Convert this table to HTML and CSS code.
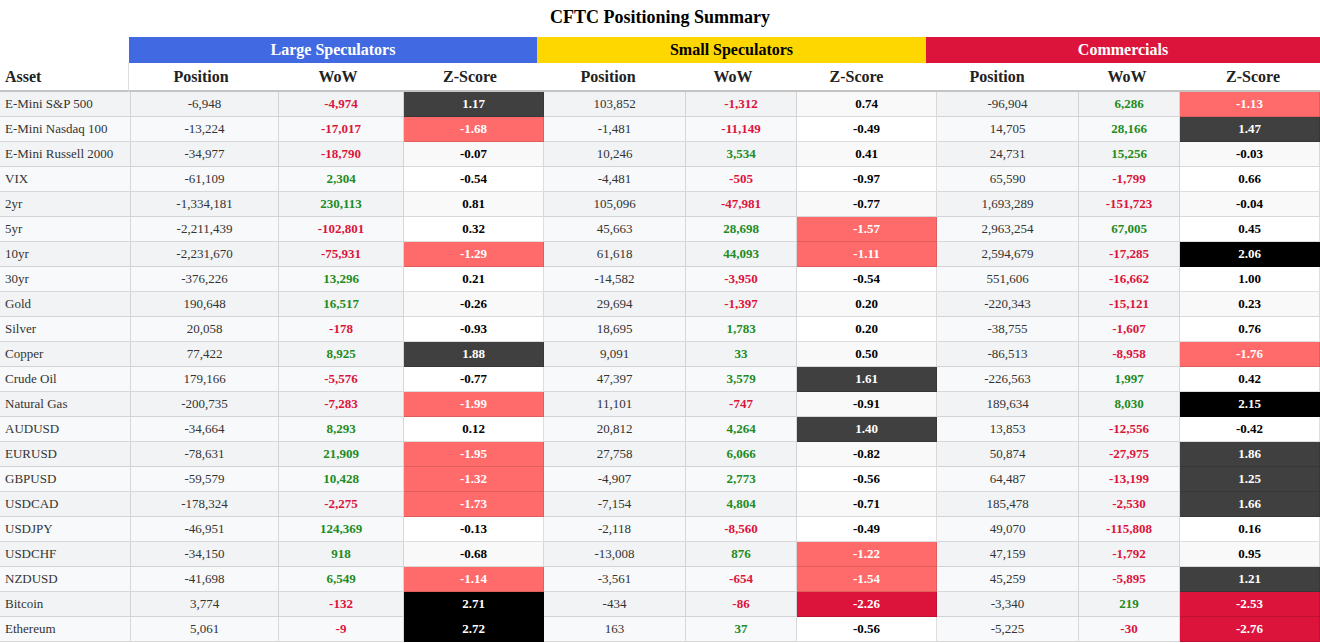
FILE: index.html
```html
<!DOCTYPE html>
<html lang="en">
<head>
<meta charset="utf-8">
<title>CFTC Positioning Summary</title>
<link rel="stylesheet" href="styles.css">
</head>
<body>
<div class="title">CFTC Positioning Summary</div>
<table class="head">
  <colgroup>
    <col class="h-asset">
    <col class="h1"><col class="h2"><col class="h3">
    <col class="h4"><col class="h5"><col class="h6">
    <col class="h7"><col class="h8"><col class="h9">
  </colgroup>
  <tr class="groups">
    <th class="blank"></th>
    <th colspan="3" class="g-large">Large Speculators</th>
    <th colspan="3" class="g-small">Small Speculators</th>
    <th colspan="3" class="g-comm">Commercials</th>
  </tr>
  <tr class="cols">
    <th class="asset-h">Asset</th>
    <th>Position</th><th>WoW</th><th>Z-Score</th>
    <th>Position</th><th>WoW</th><th>Z-Score</th>
    <th>Position</th><th>WoW</th><th>Z-Score</th>
  </tr>
</table>
<table class="body">
  <colgroup>
    <col class="c-asset">
    <col class="c1"><col class="c2"><col class="c3">
    <col class="c4"><col class="c5"><col class="c6">
    <col class="c7"><col class="c8"><col class="c9">
  </colgroup>
  <tbody>
    <tr><td class="asset">E-Mini S&amp;P 500</td><td>-6,948</td><td class="neg">-4,974</td><td class="z zd">1.17</td><td>103,852</td><td class="neg">-1,312</td><td class="z">0.74</td><td>-96,904</td><td class="pos">6,286</td><td class="z zs">-1.13</td></tr>
    <tr><td class="asset">E-Mini Nasdaq 100</td><td>-13,224</td><td class="neg">-17,017</td><td class="z zs">-1.68</td><td>-1,481</td><td class="neg">-11,149</td><td class="z">-0.49</td><td>14,705</td><td class="pos">28,166</td><td class="z zd">1.47</td></tr>
    <tr><td class="asset">E-Mini Russell 2000</td><td>-34,977</td><td class="neg">-18,790</td><td class="z">-0.07</td><td>10,246</td><td class="pos">3,534</td><td class="z">0.41</td><td>24,731</td><td class="pos">15,256</td><td class="z">-0.03</td></tr>
    <tr><td class="asset">VIX</td><td>-61,109</td><td class="pos">2,304</td><td class="z">-0.54</td><td>-4,481</td><td class="neg">-505</td><td class="z">-0.97</td><td>65,590</td><td class="neg">-1,799</td><td class="z">0.66</td></tr>
    <tr><td class="asset">2yr</td><td>-1,334,181</td><td class="pos">230,113</td><td class="z">0.81</td><td>105,096</td><td class="neg">-47,981</td><td class="z">-0.77</td><td>1,693,289</td><td class="neg">-151,723</td><td class="z">-0.04</td></tr>
    <tr><td class="asset">5yr</td><td>-2,211,439</td><td class="neg">-102,801</td><td class="z">0.32</td><td>45,663</td><td class="pos">28,698</td><td class="z zs">-1.57</td><td>2,963,254</td><td class="pos">67,005</td><td class="z">0.45</td></tr>
    <tr><td class="asset">10yr</td><td>-2,231,670</td><td class="neg">-75,931</td><td class="z zs">-1.29</td><td>61,618</td><td class="pos">44,093</td><td class="z zs">-1.11</td><td>2,594,679</td><td class="neg">-17,285</td><td class="z zb">2.06</td></tr>
    <tr><td class="asset">30yr</td><td>-376,226</td><td class="pos">13,296</td><td class="z">0.21</td><td>-14,582</td><td class="neg">-3,950</td><td class="z">-0.54</td><td>551,606</td><td class="neg">-16,662</td><td class="z">1.00</td></tr>
    <tr><td class="asset">Gold</td><td>190,648</td><td class="pos">16,517</td><td class="z">-0.26</td><td>29,694</td><td class="neg">-1,397</td><td class="z">0.20</td><td>-220,343</td><td class="neg">-15,121</td><td class="z">0.23</td></tr>
    <tr><td class="asset">Silver</td><td>20,058</td><td class="neg">-178</td><td class="z">-0.93</td><td>18,695</td><td class="pos">1,783</td><td class="z">0.20</td><td>-38,755</td><td class="neg">-1,607</td><td class="z">0.76</td></tr>
    <tr><td class="asset">Copper</td><td>77,422</td><td class="pos">8,925</td><td class="z zd">1.88</td><td>9,091</td><td class="pos">33</td><td class="z">0.50</td><td>-86,513</td><td class="neg">-8,958</td><td class="z zs">-1.76</td></tr>
    <tr><td class="asset">Crude Oil</td><td>179,166</td><td class="neg">-5,576</td><td class="z">-0.77</td><td>47,397</td><td class="pos">3,579</td><td class="z zd">1.61</td><td>-226,563</td><td class="pos">1,997</td><td class="z">0.42</td></tr>
    <tr><td class="asset">Natural Gas</td><td>-200,735</td><td class="neg">-7,283</td><td class="z zs">-1.99</td><td>11,101</td><td class="neg">-747</td><td class="z">-0.91</td><td>189,634</td><td class="pos">8,030</td><td class="z zb">2.15</td></tr>
    <tr><td class="asset">AUDUSD</td><td>-34,664</td><td class="pos">8,293</td><td class="z">0.12</td><td>20,812</td><td class="pos">4,264</td><td class="z zd">1.40</td><td>13,853</td><td class="neg">-12,556</td><td class="z">-0.42</td></tr>
    <tr><td class="asset">EURUSD</td><td>-78,631</td><td class="pos">21,909</td><td class="z zs">-1.95</td><td>27,758</td><td class="pos">6,066</td><td class="z">-0.82</td><td>50,874</td><td class="neg">-27,975</td><td class="z zd">1.86</td></tr>
    <tr><td class="asset">GBPUSD</td><td>-59,579</td><td class="pos">10,428</td><td class="z zs">-1.32</td><td>-4,907</td><td class="pos">2,773</td><td class="z">-0.56</td><td>64,487</td><td class="neg">-13,199</td><td class="z zd">1.25</td></tr>
    <tr><td class="asset">USDCAD</td><td>-178,324</td><td class="neg">-2,275</td><td class="z zs">-1.73</td><td>-7,154</td><td class="pos">4,804</td><td class="z">-0.71</td><td>185,478</td><td class="neg">-2,530</td><td class="z zd">1.66</td></tr>
    <tr><td class="asset">USDJPY</td><td>-46,951</td><td class="pos">124,369</td><td class="z">-0.13</td><td>-2,118</td><td class="neg">-8,560</td><td class="z">-0.49</td><td>49,070</td><td class="neg">-115,808</td><td class="z">0.16</td></tr>
    <tr><td class="asset">USDCHF</td><td>-34,150</td><td class="pos">918</td><td class="z">-0.68</td><td>-13,008</td><td class="pos">876</td><td class="z zs">-1.22</td><td>47,159</td><td class="neg">-1,792</td><td class="z">0.95</td></tr>
    <tr><td class="asset">NZDUSD</td><td>-41,698</td><td class="pos">6,549</td><td class="z zs">-1.14</td><td>-3,561</td><td class="neg">-654</td><td class="z zs">-1.54</td><td>45,259</td><td class="neg">-5,895</td><td class="z zd">1.21</td></tr>
    <tr><td class="asset">Bitcoin</td><td>3,774</td><td class="neg">-132</td><td class="z zb">2.71</td><td>-434</td><td class="neg">-86</td><td class="z zc">-2.26</td><td>-3,340</td><td class="pos">219</td><td class="z zc">-2.53</td></tr>
    <tr><td class="asset">Ethereum</td><td>5,061</td><td class="neg">-9</td><td class="z zb">2.72</td><td>163</td><td class="pos">37</td><td class="z">-0.56</td><td>-5,225</td><td class="neg">-30</td><td class="z zc">-2.76</td></tr>
  </tbody>
</table>
</body>
</html>
```
FILE: styles.css
```css
html, body {
  margin: 0;
  padding: 0;
  background: #ffffff;
}
body {
  font-family: "Liberation Serif", "Times New Roman", serif;
  color: #333333;
  width: 1320px;
  overflow: hidden;
}
.title {
  text-align: center;
  font-weight: bold;
  font-size: 18px;
  line-height: 20px;
  padding: 7px 0 10px;
  color: #000000;
}
table {
  width: 1320px;
  table-layout: fixed;
  border-collapse: separate;
  border-spacing: 0;
  font-family: "Liberation Serif", "Times New Roman", serif;
}
table th,
table td {
  font-family: "Liberation Serif", "Times New Roman", serif;
}
/* header widths */
.h-asset { width: 129px; }
.h1 { width: 144px; } .h2 { width: 130px; } .h3 { width: 134px; }
.h4 { width: 142px; } .h5 { width: 108px; } .h6 { width: 139px; }
.h7 { width: 142px; } .h8 { width: 118px; } .h9 { width: 134px; }

.head th {
  padding: 0;
  font-weight: bold;
  font-size: 16px;
  box-sizing: border-box;
}
.groups th {
  height: 26px;
  color: #ffffff;
}
.groups .blank { background: #ffffff; }
.g-large { background: #4169e1; }
.g-small { background: #ffd700; color: #000000 !important; }
.g-comm { background: #dc143c; }
.cols th {
  height: 29px;
  color: #222222;
  background: #ffffff;
  border-bottom: 2px solid #c4c4c4;
}
.cols .asset-h {
  text-align: left;
  padding-left: 5px;
  border-right: 1px solid #dddddd;
}

/* body widths */
.c-asset { width: 131px; }
.c1 { width: 148px; } .c2 { width: 125px; } .c3 { width: 140px; }
.c4 { width: 142px; } .c5 { width: 111px; } .c6 { width: 140px; }
.c7 { width: 142px; } .c8 { width: 101px; } .c9 { width: 140px; }

.body td {
  height: 25px;
  box-sizing: border-box;
  padding: 0 4px;
  font-size: 13px;
  text-align: center;
  border-right: 1px solid rgba(0, 0, 0, 0.13);
  border-bottom: 1px solid rgba(0, 0, 0, 0.13);
  color: #333333;
  white-space: nowrap;
}
.body tr:nth-child(odd) td { background: #f2f3f5; }
.body tr:nth-child(even) td { background: #f8f9fa; }
.body td.asset { text-align: left; padding-left: 5px; }
.body td.neg { color: #dc143c; font-weight: bold; }
.body td.pos { color: #228b22; font-weight: bold; }
.body td.z { font-weight: bold; color: #000000; }
.body tr:nth-child(odd) td.z { background: #f9f9fa; }
.body tr:nth-child(even) td.z { background: #ffffff; }
.body tr td.z.zd { background: #404040; color: #ffffff; }
.body tr td.z.zs { background: #ff6b6b; color: #ffffff; }
.body tr td.z.zb { background: #000000; color: #ffffff; }
.body tr td.z.zc { background: #dc143c; color: #ffffff; }
```
